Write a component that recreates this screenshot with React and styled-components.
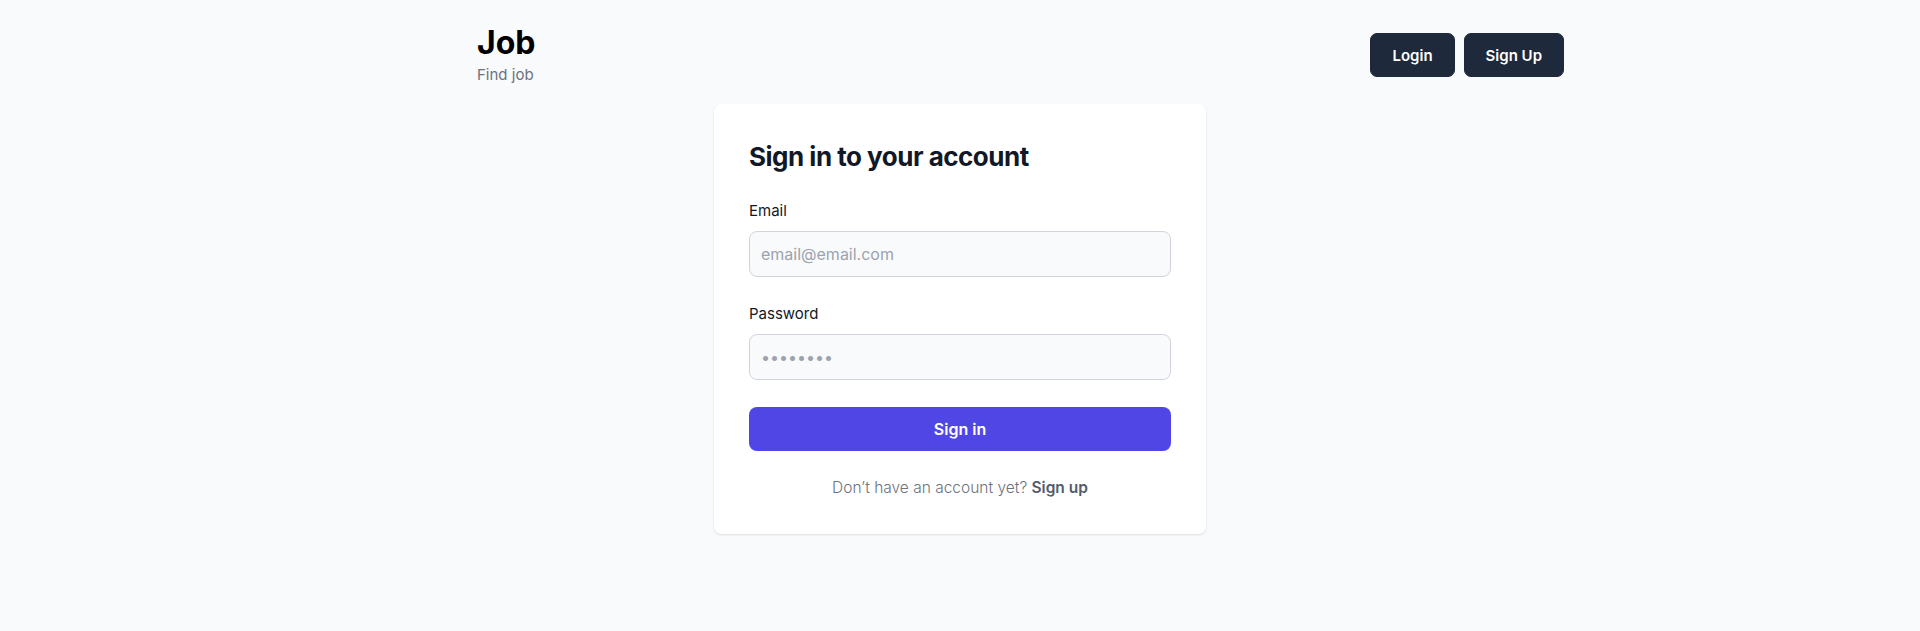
import React from 'react';
import styled, { createGlobalStyle } from 'styled-components';

const GlobalStyle = createGlobalStyle`
    * {
        box-sizing: border-box;
    }
    body {
        margin: 0;
        background: #f9fafb;
        font-family: Inter, 'Noto Sans', sans-serif;
        color: #111827;
    }
`;

const Page = styled.div`
    min-height: 631px;
    display: flex;
    flex-direction: column;
    align-items: center;
`;

const Header = styled.header`
    width: 1280px;
    display: flex;
    justify-content: space-between;
    align-items: flex-start;
    padding: 23px 36px 0 157px;
`;

const Brand = styled.div`
    display: flex;
    flex-direction: column;
`;

const Logo = styled.h1`
    margin: 0;
    font-size: 32px;
    font-weight: 700;
    line-height: 40px;
    color: #000;
`;

const Tagline = styled.span`
    margin-top: 2px;
    font-size: 15px;
    line-height: 20px;
    color: #6b7280;
`;

const NavButtons = styled.div`
    display: flex;
    gap: 9px;
    margin-top: 10px;
`;

const NavButton = styled.button`
    height: 44px;
    padding: 0 ${(p) => p.$pad}px;
    border: 1px solid #1e293b;
    border-radius: 7px;
    background: #1e293b;
    color: #fff;
    font-family: inherit;
    font-size: 15px;
    font-weight: 600;
    cursor: pointer;
`;

const Card = styled.div`
    width: 492px;
    margin-top: 19px;
    padding: 37px 35px 35px;
    background: #fff;
    border-radius: 8px;
    box-shadow: 0 1px 3px rgba(0, 0, 0, 0.08), 0 1px 2px rgba(0, 0, 0, 0.04);
`;

const Title = styled.h2`
    margin: 0;
    font-size: 26px;
    font-weight: 700;
    line-height: 32px;
    letter-spacing: -0.5px;
    color: #111827;
`;

const Form = styled.form`
    display: flex;
    flex-direction: column;
    margin-top: 28px;
`;

const Field = styled.div`
    display: flex;
    flex-direction: column;
    margin-bottom: ${(p) => p.$mb}px;
`;

const Label = styled.label`
    font-size: 15px;
    font-weight: 400;
    line-height: 20px;
    color: #111827;
    margin-bottom: 10px;
`;

const Input = styled.input`
    height: 46px;
    padding: 0 11px;
    border: 1px solid #d1d5db;
    border-radius: 8px;
    background: #f9fafb;
    font-family: inherit;
    font-size: 16px;
    color: #111827;
    outline: none;

    &::placeholder {
        color: #9ca3af;
    }
`;

const SubmitButton = styled.button`
    height: 44px;
    border: none;
    border-radius: 8px;
    background: #4f46e5;
    color: #fff;
    font-family: inherit;
    font-size: 16px;
    font-weight: 600;
    cursor: pointer;
`;

const Footer = styled.p`
    margin: 26px 0 0;
    text-align: center;
    font-size: 15.5px;
    font-weight: 300;
    line-height: 22px;
    color: #6b7280;
`;

const FooterLink = styled.a`
    font-weight: 600;
    color: #525c6b;
    text-decoration: none;
`;

const App = () => {
    return (
        <Page>
            <GlobalStyle />
            <Header>
                <Brand>
                    <Logo>Job</Logo>
                    <Tagline>Find job</Tagline>
                </Brand>
                <NavButtons>
                    <NavButton $pad={21}>Login</NavButton>
                    <NavButton $pad={21}>Sign Up</NavButton>
                </NavButtons>
            </Header>
            <Card>
                <Title>Sign in to your account</Title>
                <Form onSubmit={(e) => e.preventDefault()}>
                    <Field $mb={27}>
                        <Label htmlFor="email">Email</Label>
                        <Input id="email" type="email" placeholder="email@email.com" />
                    </Field>
                    <Field $mb={27}>
                        <Label htmlFor="password">Password</Label>
                        <Input id="password" type="password" placeholder="••••••••" />
                    </Field>
                    <SubmitButton type="submit">Sign in</SubmitButton>
                </Form>
                <Footer>
                    Don’t have an account yet? <FooterLink href="#">Sign up</FooterLink>
                </Footer>
            </Card>
        </Page>
    );
};

export default App;
